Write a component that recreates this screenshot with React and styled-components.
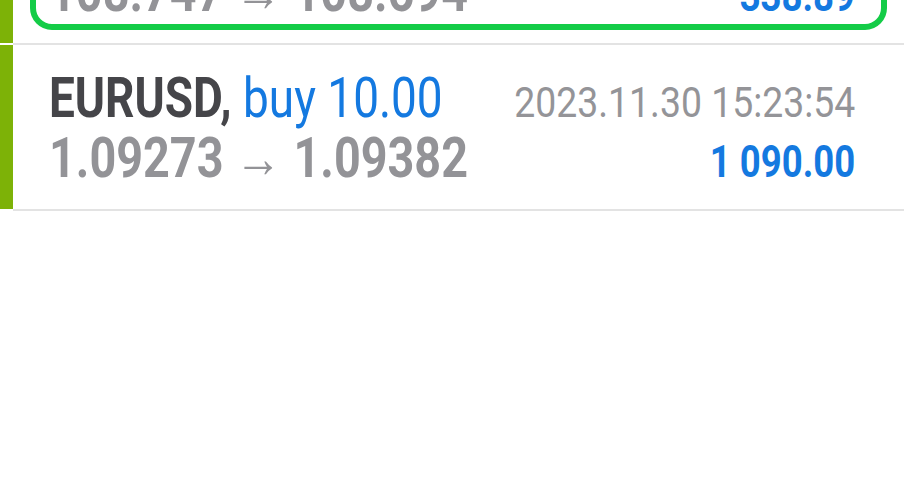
import styled, { createGlobalStyle } from "styled-components";

const GlobalStyle = createGlobalStyle`
  html, body {
    margin: 0;
    padding: 0;
    background: #ffffff;
  }
  body {
    font-family: Roboto, "Noto Sans", sans-serif;
  }
`;

const Viewport = styled.div`
  width: 904px;
  height: 480px;
  overflow: hidden;
  background: #ffffff;
`;

// the list is scrolled so the previous trade is cut at the top
const List = styled.div`
  margin-top: -121px;
`;

const Row = styled.div`
  position: relative;
  display: grid;
  grid-template-columns: 13px minmax(0, 1fr);
`;

const Bar = styled.div`
  background: #7db207;
  margin-bottom: 2px;
`;

const Content = styled.div`
  display: flex;
  flex-direction: column;
  min-width: 0;
  padding: 23px 49px 21px 36px;
  border-bottom: 2px solid #e3e3e3;
`;

const Line = styled.div`
  display: flex;
  justify-content: space-between;
  align-items: baseline;
  height: 60px;
  line-height: 60px;
  white-space: nowrap;
`;

// Roboto squeezed to look like the condensed face of the app
const Cond = styled.span`
  display: inline-block;
  flex: 0 ${(p) => (p.$right ? 0 : 1)} auto;
  min-width: 0;
  transform: scaleX(${(p) => p.$scale || 0.84});
  transform-origin: ${(p) => (p.$right ? "right" : "left")} center;
`;

const Symbol = styled.span`
  font-size: 55px;
  font-weight: 700;
  color: #454549;
`;

const Deal = styled.span`
  font-size: 55px;
  font-weight: 400;
  color: #1479e0;
`;

const Prices = styled.span`
  font-size: 55px;
  font-weight: 700;
  color: #939397;
`;

const Time = styled.span`
  font-size: 42px;
  font-weight: 400;
  color: #949498;
`;

const Profit = styled.span`
  font-size: 44px;
  font-weight: 700;
  color: #1479e0;
`;

const Selection = styled.div`
  position: absolute;
  left: 30px;
  right: 17px;
  top: 14px;
  bottom: 15px;
  border: 6px solid #14cc47;
  border-radius: 22px;
  pointer-events: none;
`;

const trades = [
  {
    symbol: "USDJPY",
    type: "sell",
    volume: "10.00",
    time: "2023.11.30 14:08:12",
    open: "108.747",
    close: "108.694",
    profit: "338.89",
    selected: true,
  },
  {
    symbol: "EURUSD",
    type: "buy",
    volume: "10.00",
    time: "2023.11.30 15:23:54",
    open: "1.09273",
    close: "1.09382",
    profit: "1 090.00",
  },
];

const TradeRow = ({ t }) => (
  <Row>
    <Bar />
    <Content>
      <Line>
        <Cond $scale={0.835}>
          <Symbol>{t.symbol}, </Symbol>
          <Deal>
            {t.type} {t.volume}
          </Deal>
        </Cond>
        <Cond $right $scale={0.89}>
          <Time>{t.time}</Time>
        </Cond>
      </Line>
      <Line>
        <Cond $scale={0.85}>
          <Prices>
            {t.open} → {t.close}
          </Prices>
        </Cond>
        <Cond $right $scale={0.83}>
          <Profit>{t.profit}</Profit>
        </Cond>
      </Line>
    </Content>
    {t.selected && <Selection />}
  </Row>
);

const App = () => {
  return (
    <>
      <GlobalStyle />
      <Viewport>
        <List>
          {trades.map((t, i) => (
            <TradeRow key={i} t={t} />
          ))}
        </List>
      </Viewport>
    </>
  );
};

export default App;
